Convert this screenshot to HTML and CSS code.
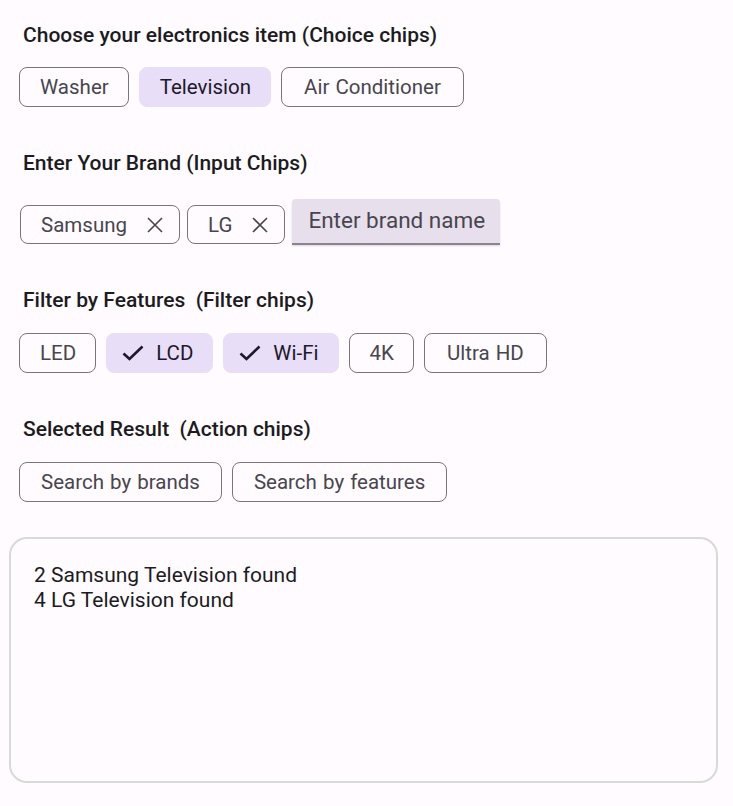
FILE: index.html
```html
<!DOCTYPE html>
<html>
<head>
<meta charset="utf-8">
<link rel="stylesheet" href="styles.css">
</head>
<body>
<main class="page">
  <h2 class="title t1">Choose your electronics item (Choice chips)</h2>
  <div class="row r1">
    <span class="chip">Washer</span>
    <span class="chip sel">Television</span>
    <span class="chip wide">Air Conditioner</span>
  </div>

  <h2 class="title t2">Enter Your Brand (Input Chips)</h2>
  <div class="row r2">
    <span class="chip input-chip">Samsung
      <svg class="x" viewBox="0 0 16 16"><path d="M1 1L15 15M15 1L1 15"/></svg>
    </span>
    <span class="chip input-chip">LG
      <svg class="x" viewBox="0 0 16 16"><path d="M1 1L15 15M15 1L1 15"/></svg>
    </span>
    <span class="field">Enter brand name</span>
  </div>

  <h2 class="title t3">Filter by Features&nbsp; (Filter chips)</h2>
  <div class="row r3">
    <span class="chip">LED</span>
    <span class="chip sel filt"><svg class="chk" viewBox="0 0 22 16"><path d="M1.5 8.5L7.5 14L20.5 1.5"/></svg>LCD</span>
    <span class="chip sel filt"><svg class="chk" viewBox="0 0 22 16"><path d="M1.5 8.5L7.5 14L20.5 1.5"/></svg>Wi-Fi</span>
    <span class="chip">4K</span>
    <span class="chip wide">Ultra HD</span>
  </div>

  <h2 class="title t4">Selected Result&nbsp; (Action chips)</h2>
  <div class="row r4">
    <span class="chip action">Search by brands</span>
    <span class="chip action">Search by features</span>
  </div>

  <div class="result">
    <p>2 Samsung Television found</p>
    <p>4 LG Television found</p>
  </div>
</main>
</body>
</html>
```

FILE: styles.css
```css
html, body {
  margin: 0;
  padding: 0;
  background: #fffbfe;
}
.page {
  width: 733px;
  height: 806px;
  box-sizing: border-box;
  padding: 23px 0 0 19px;
  font-family: Roboto, "Noto Sans", sans-serif;
  color: #1c1b1f;
}
.title {
  margin: 0 0 0 4px;
  font-size: 21px;
  font-weight: 500;
  line-height: 24px;
  color: #1c1b1f;
}
.row {
  display: flex;
  gap: 10px;
  align-items: center;
}
.r1 { margin-top: 20px; }
.t2 { margin-top: 44px; }
.r2 { margin-top: 24px; gap: 7px; align-items: flex-end; }
.t3 { margin-top: 43px; }
.r3 { margin-top: 21px; }
.t4 { margin-top: 44px; }
.r4 { margin-top: 21px; }
.chip {
  display: inline-flex;
  align-items: center;
  box-sizing: border-box;
  height: 40px;
  padding: 0 19px 0 20px;
  border: 1px solid #79747e;
  border-radius: 8px;
  font-size: 20.5px;
  word-spacing: 1px;
  color: #49454f;
  white-space: nowrap;
}
.chip.wide {
  padding: 0 22px 0 22px;
}
.chip.action {
  padding: 0 21px 0 21px;
}
.chip.sel {
  background: #e8def8;
  border-color: #e8def8;
  color: #1d192b;
  padding: 0 19px 0 20px;
}
.chip.filt {
  padding-left: 15px;
  padding-right: 19px;
}
.chk {
  width: 22px;
  height: 16px;
  margin-right: 12px;
  fill: none;
  stroke: #1d192b;
  stroke-width: 2.6;
}
.input-chip {
  height: 39px;
  margin-bottom: 1px;
  padding: 0 16px 0 20px;
  margin-left: 1px;
}
.input-chip + .input-chip { margin-left: 0; }
.x {
  width: 16px;
  height: 16px;
  margin-left: 20px;
  stroke: #49454f;
  stroke-width: 1.6;
  fill: none;
}
.field {
  display: inline-flex;
  align-items: center;
  box-sizing: border-box;
  height: 46px;
  width: 208px;
  padding: 0 0 2px 16px;
  margin-left: 0;
  background: #e7e0ec;
  border-radius: 4px 4px 0 0;
  border-bottom: 2px solid #8a8590;
  box-shadow: 0 1px 2px rgba(0,0,0,0.15);
  font-size: 22.5px;
  color: #49454f;
}
.result {
  box-sizing: border-box;
  width: 709px;
  height: 246px;
  margin: 35px 0 0 -10px;
  padding: 24px 23px;
  border: 2px solid #d9d9d9;
  border-radius: 18px;
  background: #fffbfe;
}
.result p {
  margin: 0;
  font-size: 21px;
  line-height: 25px;
  color: #1c1b1f;
}
```
